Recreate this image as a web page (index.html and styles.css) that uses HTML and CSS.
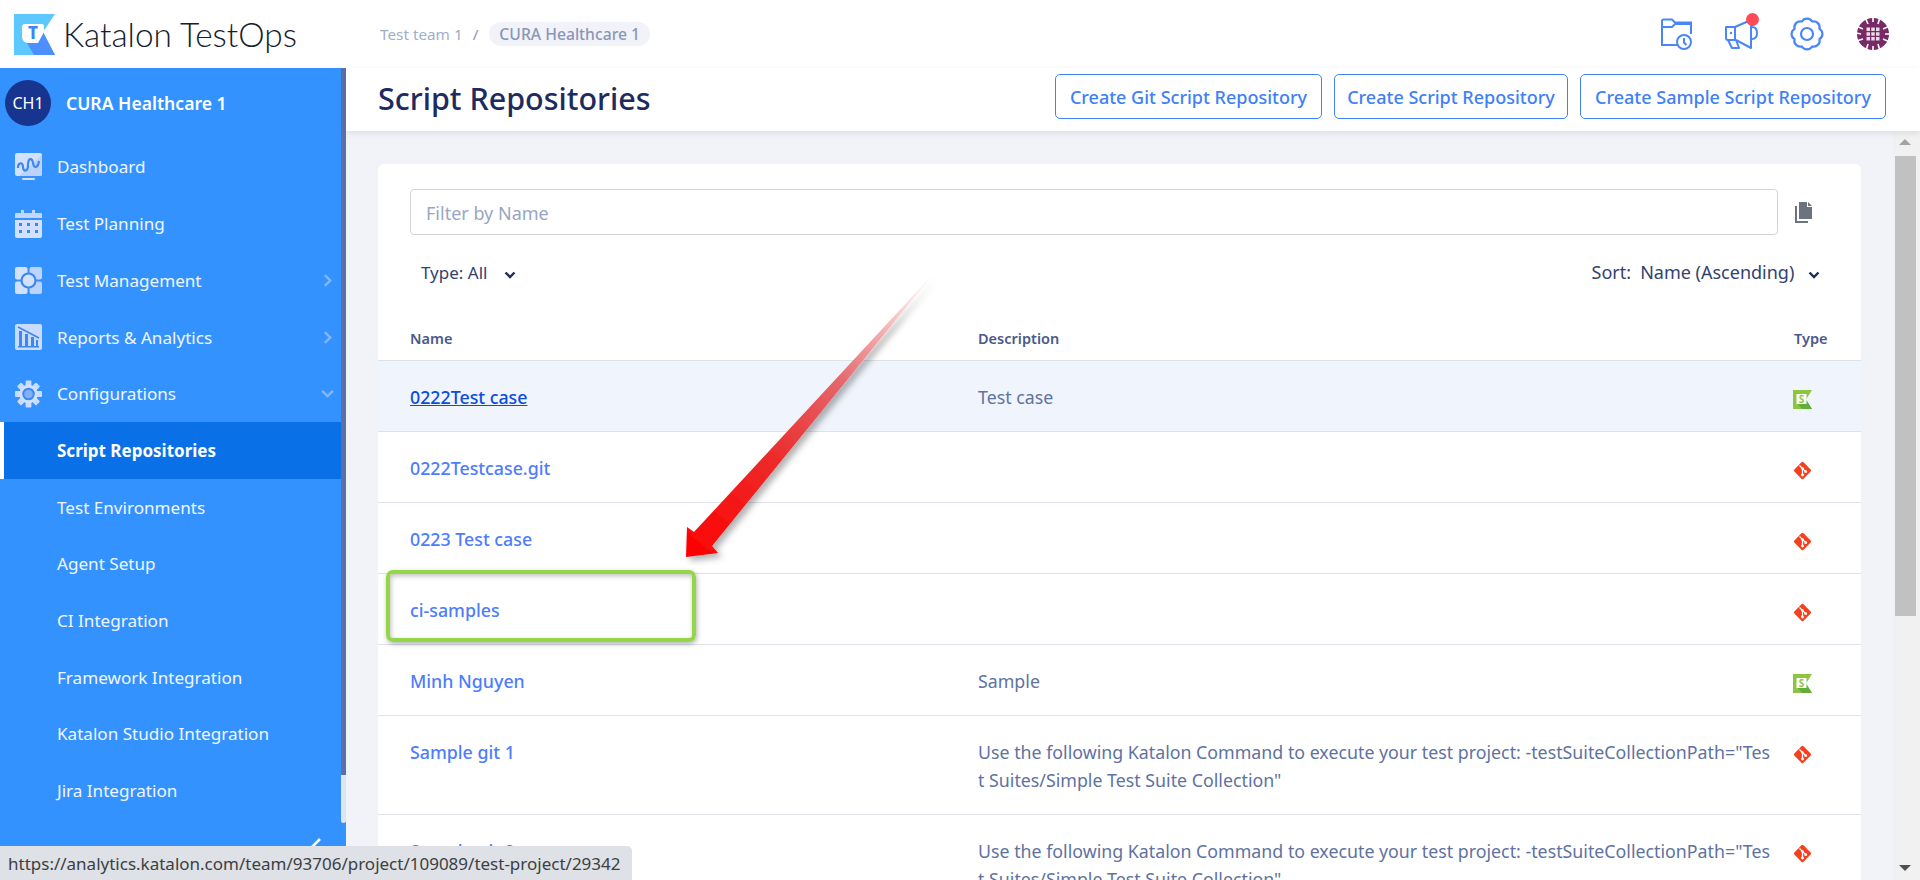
FILE: index.html
```html
<!DOCTYPE html>
<html lang="en">
<head>
    <meta charset="UTF-8">
    <title>Script Repositories</title>
    <link rel="stylesheet" href="styles.css">
</head>
<body>
    <svg class="defs" width="0" height="0">
        <symbol id="git" viewBox="0 0 19 19">
            <rect x="3" y="3" width="13" height="13" rx="1.500" transform="rotate(45 9.500 9.500)" fill="#f4401e"/>
            <path d="M6.500 4.500l3 3v6.500M9.500 7.500l3.200 3.200" fill="none" stroke="#fff" stroke-width="1.200"/>
            <circle cx="9.500" cy="7.500" r="1.300" fill="#fff"/>
            <circle cx="9.500" cy="14" r="1.400" fill="#fff"/>
            <circle cx="12.700" cy="10.700" r="1.400" fill="#fff"/>
        </symbol>
    </svg>

    <header class="topbar">
        <div class="brand">
            <svg class="brand-logo" viewBox="0 0 41 41" width="41" height="41">
                <path d="M0 0h41L29 18l12 23H0z" fill="#5cc8ff"/>
                <path d="M10 24l19-6 12 23H20z" fill="#4d8fff"/>
                <path d="M11 10h17a2 2 0 0 1 2 2v6l-6 11H14a6 6 0 0 1-6-6V13a3 3 0 0 1 3-3z" fill="#fff"/>
                <text x="19" y="25" class="mark-t">T</text>
            </svg>
            <span class="brand-name">Katalon TestOps</span>
        </div>
        <nav class="crumbs">
            <span class="crumb">Test team 1</span>
            <span class="crumb-sep">/</span>
            <span class="crumb-pill">CURA Healthcare 1</span>
        </nav>
        <div class="top-icons">
            <svg class="top-icon" viewBox="0 0 33 32" width="33" height="32">
                <g fill="none" stroke="#4a86f7" stroke-width="2">
                    <path d="M18 27H2V9h10l3-3h16v10"/>
                    <path d="M2 9V3a1.500 1.500 0 0 1 1.500-1.500H12l3 3h16V6"/>
                    <circle cx="24" cy="24" r="7"/>
                    <path d="M24 20v4.500l2.500 2.500"/>
                </g>
            </svg>
            <span class="bell">
                <svg viewBox="0 0 33 32" width="33" height="32">
                    <g fill="none" stroke="#4a86f7" stroke-width="2" stroke-linejoin="round">
                        <path d="M1 9h9v13H3a2 2 0 0 1-2-2z"/>
                        <path d="M10 9L26 2v28L11 22"/>
                        <path d="M27 9c3 0 5 2 5 6s-2 6-5 6"/>
                        <path d="M3 22l4 8h7l-3-8"/>
                    </g>
                    <circle cx="6" cy="15" r="1.200" fill="#4a86f7"/>
                </svg>
                <span class="bell-dot"></span>
            </span>
            <svg class="top-icon" viewBox="0 0 34 34" width="34" height="34">
                <path d="M22.170 4.530A6 6 0 0 1 29.470 11.830A6 6 0 0 1 29.470 22.170A6 6 0 0 1 22.170 29.470A6 6 0 0 1 11.830 29.470A6 6 0 0 1 4.530 22.170A6 6 0 0 1 4.530 11.830A6 6 0 0 1 11.830 4.530A6 6 0 0 1 22.170 4.530z" fill="none" stroke="#4a86f7" stroke-width="2.200"/>
                <circle cx="17" cy="17" r="6" fill="none" stroke="#4a86f7" stroke-width="2.200"/>
            </svg>
            <svg class="top-icon" viewBox="0 0 34 34" width="34" height="34">
                <circle cx="17" cy="17" r="16" fill="#772a66"/>
                <g fill="#e9dce6">
                    <rect x="10.500" y="10.500" width="3.500" height="3.500"/><rect x="15.250" y="10.500" width="3.500" height="3.500"/><rect x="20" y="10.500" width="3.500" height="3.500"/>
                    <rect x="10.500" y="15.250" width="3.500" height="3.500"/><rect x="15.250" y="15.250" width="3.500" height="3.500"/><rect x="20" y="15.250" width="3.500" height="3.500"/>
                    <rect x="10.500" y="20" width="3.500" height="3.500"/><rect x="15.250" y="20" width="3.500" height="3.500"/><rect x="20" y="20" width="3.500" height="3.500"/>
                </g>
                <g stroke="#fff" stroke-width="1.600">
                    <path d="M0 9l7 3M0 24l7-2M27 12l7-3M27 22l7 3M9 0l3 7M24 0l-2 7M12 27l-2 7M22 27l2 7M0 16l5 1M29 17l5 0M17 0l0 5M17 29l0 5"/>
                </g>
            </svg>
        </div>
    </header>

    <div class="layout">
        <aside class="sidebar">
            <div class="side-main">
                <div class="project">
                    <span class="project-badge">CH1</span>
                    <span class="project-name">CURA Healthcare 1</span>
                </div>
                <a class="side-item">
                    <svg class="side-icon" viewBox="0 0 27 27" width="27" height="27">
                        <rect x="0" y="0" width="27" height="23" rx="2" fill="#d3e1ff"/>
                        <path d="M27 2L4 23h21a2 2 0 0 0 2-2z" fill="#bcd2ff"/>
                        <path d="M3 15c0-6 5-6 5-1s5 5 5-2 4-8 5-2 5 5 6-2" fill="none" stroke="#3a88f0" stroke-width="2.200"/>
                        <rect x="7" y="25" width="13" height="2" rx="1" fill="#d3e1ff"/>
                    </svg>
                    <span>Dashboard</span>
                </a>
                <a class="side-item">
                    <svg class="side-icon" viewBox="0 0 27 28" width="27" height="28">
                        <path d="M1 3h5V0h3v3h8V0h3v3h6a1 1 0 0 1 1 1v4H0V4a1 1 0 0 1 1-1z" fill="#c3d7ff"/>
                        <path d="M0 10h27v16a2 2 0 0 1-2 2H2a2 2 0 0 1-2-2z" fill="#d3e1ff"/>
                        <g fill="#3a88f0">
                            <rect x="4" y="13" width="3" height="3"/><rect x="12" y="13" width="3" height="3"/><rect x="20" y="13" width="3" height="3"/>
                            <rect x="4" y="20" width="3" height="3"/><rect x="12" y="20" width="3" height="3"/><rect x="20" y="20" width="3" height="3"/>
                        </g>
                    </svg>
                    <span>Test Planning</span>
                </a>
                <a class="side-item">
                    <svg class="side-icon" viewBox="0 0 27 27" width="27" height="27">
                        <rect x="0" y="0" width="12.500" height="12.500" rx="2" fill="#d3e1ff"/>
                        <rect x="14.500" y="0" width="12.500" height="12.500" rx="2" fill="#bcd2ff"/>
                        <rect x="0" y="14.500" width="12.500" height="12.500" rx="2" fill="#d3e1ff"/>
                        <rect x="14.500" y="14.500" width="12.500" height="12.500" rx="2" fill="#bcd2ff"/>
                        <circle cx="13.500" cy="13.500" r="7" fill="#d3e1ff" stroke="#3a88f0" stroke-width="2.200"/>
                    </svg>
                    <span>Test Management</span>
                    <svg class="side-arrow" viewBox="0 0 10 14" width="9" height="13"><path d="M2 1l6 6-6 6" fill="none" stroke="#82b6ff" stroke-width="2.600"/></svg>
                </a>
                <a class="side-item">
                    <svg class="side-icon" viewBox="0 0 27 27" width="27" height="27">
                        <rect x="0" y="0" width="27" height="26" rx="2" fill="#c9dbff"/>
                        <path d="M3 3l21 11" fill="none" stroke="#3a88f0" stroke-width="1.500"/>
                        <g fill="#3a88f0">
                            <rect x="4" y="7" width="3" height="15"/><rect x="10" y="10" width="3" height="12"/><rect x="16" y="13" width="3" height="9"/><rect x="21" y="16" width="2" height="6"/>
                            <rect x="3" y="22" width="21" height="1.500"/>
                        </g>
                    </svg>
                    <span>Reports &amp; Analytics</span>
                    <svg class="side-arrow" viewBox="0 0 10 14" width="9" height="13"><path d="M2 1l6 6-6 6" fill="none" stroke="#82b6ff" stroke-width="2.600"/></svg>
                </a>
                <a class="side-item">
                    <svg class="side-icon" viewBox="0 0 28 28" width="28" height="28">
                        <g fill="#c9dbff">
                            <rect x="11" y="0" width="6" height="28" rx="1"/>
                            <rect x="11" y="0" width="6" height="28" rx="1" transform="rotate(45 14 14)"/>
                            <rect x="11" y="0" width="6" height="28" rx="1" transform="rotate(90 14 14)"/>
                            <rect x="11" y="0" width="6" height="28" rx="1" transform="rotate(135 14 14)"/>
                        </g>
                        <circle cx="14" cy="14" r="9.500" fill="#d3e1ff"/>
                        <circle cx="14" cy="14" r="5.500" fill="#7fb0f8" stroke="#3a88f0" stroke-width="2"/>
                    </svg>
                    <span>Configurations</span>
                    <svg class="side-arrow side-arrow-down" viewBox="0 0 14 10" width="13" height="9"><path d="M1 2l6 6 6-6" fill="none" stroke="#82b6ff" stroke-width="2.600"/></svg>
                </a>
                <a class="side-item side-sub is-active">Script Repositories</a>
                <a class="side-item side-sub">Test Environments</a>
                <a class="side-item side-sub">Agent Setup</a>
                <a class="side-item side-sub">CI Integration</a>
                <a class="side-item side-sub">Framework Integration</a>
                <a class="side-item side-sub">Katalon Studio Integration</a>
                <a class="side-item side-sub">Jira Integration</a>
                <svg class="side-collapse" viewBox="0 0 14 14" width="14" height="14"><path d="M11 1L2 10l9 9" fill="none" stroke="#fff" stroke-width="2.600"/></svg>
            </div>
            <div class="side-scroll">
                <div class="side-thumb"></div>
                <div class="side-track"></div>
            </div>
        </aside>

        <main class="page">
            <div class="page-head">
                <h1>Script Repositories</h1>
                <div class="page-actions">
                    <button class="btn btn-git">Create Git Script Repository</button>
                    <button class="btn btn-script">Create Script Repository</button>
                    <button class="btn btn-sample">Create Sample Script Repository</button>
                </div>
            </div>
            <div class="page-body">
                <div class="page-scroll">
                    <section class="card">
                        <div class="filter-row">
                            <input class="filter-input" type="text" placeholder="Filter by Name">
                            <svg class="copy-icon" viewBox="0 0 18 21" width="18" height="21">
                                <path d="M5 0h8v5h5v12H5z" fill="#6b7280"/>
                                <path d="M14 0l4 4h-4z" fill="#6b7280"/>
                                <path d="M3 4v15h11v2H1V4z" fill="#6b7280"/>
                            </svg>
                        </div>
                        <div class="option-row">
                            <span class="option option-type">Type: All
                                <svg viewBox="0 0 12 8" width="12" height="8"><path d="M1.500 1.500L6 6l4.500-4.500" fill="none" stroke="#1d2b5e" stroke-width="2.400"/></svg>
                            </span>
                            <span class="option option-sort"><span class="option-label">Sort:</span>Name (Ascending)
                                <svg viewBox="0 0 12 8" width="12" height="8"><path d="M1.500 1.500L6 6l4.500-4.500" fill="none" stroke="#1d2b5e" stroke-width="2.400"/></svg>
                            </span>
                        </div>
                        <table class="repo-table">
                            <colgroup>
                                <col class="col-name">
                                <col class="col-desc">
                                <col class="col-type">
                            </colgroup>
                            <thead>
                                <tr><th>Name</th><th>Description</th><th>Type</th></tr>
                            </thead>
                            <tbody>
                                <tr class="is-hover">
                                    <td><a class="repo-link">0222Test case</a></td>
                                    <td class="repo-desc">Test case</td>
                                    <td>
                                        <svg class="type-icon" viewBox="0 0 19 19" width="19" height="19">
                                            <path d="M0 0h19l-6 9.500 6 9.500H0z" fill="#8cc63f"/>
                                            <path d="M4 13l9-3.500 6 9.500H9z" fill="#62ad3c"/>
                                            <rect x="3.500" y="4" width="10" height="10" fill="#fff"/>
                                            <text x="8.500" y="12.500" class="mark-s">S</text>
                                        </svg>
                                    </td>
                                </tr>
                                <tr>
                                    <td><a class="repo-link">0222Testcase.git</a></td>
                                    <td class="repo-desc"></td>
                                    <td><svg class="type-icon" width="19" height="19"><use href="#git"/></svg></td>
                                </tr>
                                <tr>
                                    <td><a class="repo-link">0223 Test case</a></td>
                                    <td class="repo-desc"></td>
                                    <td><svg class="type-icon" width="19" height="19"><use href="#git"/></svg></td>
                                </tr>
                                <tr>
                                    <td><a class="repo-link">ci-samples</a></td>
                                    <td class="repo-desc"></td>
                                    <td><svg class="type-icon" width="19" height="19"><use href="#git"/></svg></td>
                                </tr>
                                <tr>
                                    <td><a class="repo-link">Minh Nguyen</a></td>
                                    <td class="repo-desc">Sample</td>
                                    <td>
                                        <svg class="type-icon" viewBox="0 0 19 19" width="19" height="19">
                                            <path d="M0 0h19l-6 9.500 6 9.500H0z" fill="#8cc63f"/>
                                            <path d="M4 13l9-3.500 6 9.500H9z" fill="#62ad3c"/>
                                            <rect x="3.500" y="4" width="10" height="10" fill="#fff"/>
                                            <text x="8.500" y="12.500" class="mark-s">S</text>
                                        </svg>
                                    </td>
                                </tr>
                                <tr>
                                    <td><a class="repo-link">Sample git 1</a></td>
                                    <td class="repo-desc">Use the following Katalon Command to execute your test project: -testSuiteCollectionPath="Test Suites/Simple Test Suite Collection"</td>
                                    <td><svg class="type-icon" width="19" height="19"><use href="#git"/></svg></td>
                                </tr>
                                <tr>
                                    <td><a class="repo-link">Sample git 2</a></td>
                                    <td class="repo-desc">Use the following Katalon Command to execute your test project: -testSuiteCollectionPath="Test Suites/Simple Test Suite Collection"</td>
                                    <td><svg class="type-icon" width="19" height="19"><use href="#git"/></svg></td>
                                </tr>
                            </tbody>
                        </table>
                    </section>
                </div>
                <div class="scrollbar">
                    <span class="scroll-up"></span>
                    <div class="scroll-thumb"></div>
                    <span class="scroll-down"></span>
                </div>
            </div>
        </main>
    </div>

    <!-- annotation drawn over the screenshot -->
    <div class="callout"></div>
    <svg class="callout-arrow" viewBox="0 0 1920 880" width="1920" height="880">
        <defs>
            <linearGradient id="arrow-fade" gradientUnits="userSpaceOnUse" x1="686" y1="557" x2="935" y2="272">
                <stop offset="0" stop-color="#ff0000"/>
                <stop offset="0.35" stop-color="#ec2b2b"/>
                <stop offset="0.62" stop-color="#e4686c"/>
                <stop offset="0.82" stop-color="#f6bcbc"/>
                <stop offset="1" stop-color="#fde9e9" stop-opacity="0.2"/>
            </linearGradient>
            <filter id="arrow-shadow" x="-20%" y="-20%" width="140%" height="140%">
                <feDropShadow dx="4" dy="4" stdDeviation="3" flood-color="#000" flood-opacity="0.3"/>
            </filter>
        </defs>
        <polygon points="686,557 687,527 694,532 935,272 712,546 718,553" fill="url(#arrow-fade)" filter="url(#arrow-shadow)"/>
    </svg>

    <div class="status-tip">https://analytics.katalon.com/team/93706/project/109089/test-project/29342</div>
</body>
</html>
```

FILE: styles.css
```css
html, body {
    height: 100%;
    margin: 0;
    overflow: hidden;
}

body {
    font-family: "Noto Sans", Arial, sans-serif;
    color: #1d2b5e;
    background: #fff;
    position: relative;
}

.defs {
    position: absolute;
}

.mark-s {
    font: 700 10px "Noto Sans", sans-serif;
    fill: #8cc63f;
    text-anchor: middle;
}

.mark-t {
    font: 800 17px "Noto Sans", sans-serif;
    fill: #3d86f5;
    text-anchor: middle;
}

/* top bar */
.topbar {
    height: 68px;
    display: flex;
    align-items: center;
}

.brand {
    width: 380px;
    flex-shrink: 0;
    display: flex;
    align-items: center;
    padding-left: 14px;
    box-sizing: border-box;
}

.brand-name {
    margin-left: 8px;
    font-family: Lato, sans-serif;
    font-size: 33.400px;
    font-weight: 300;
    color: #14202c;
}

.crumbs {
    display: flex;
    align-items: center;
    font-size: 15.300px;
    flex: 1;
}

.crumb {
    color: #a2adc6;
}

.crumb-sep {
    margin: 0 11px 0 10px;
    color: #8a96b8;
}

.crumb-pill {
    background: #f1f3f8;
    color: #8a96b8;
    font-size: 15.700px;
    font-weight: 500;
    padding: 0 10px;
    height: 24px;
    line-height: 25px;
    border-radius: 12px;
}

.top-icons {
    display: flex;
    align-items: center;
    gap: 32px;
    padding-right: 30px;
}

.top-icon {
    display: block;
}

.bell {
    position: relative;
    display: block;
    height: 32px;
}

.bell svg {
    display: block;
}

.bell-dot {
    position: absolute;
    top: -5px;
    right: -1px;
    width: 13px;
    height: 13px;
    border-radius: 50%;
    background: #ff4b55;
}

/* layout */
.layout {
    display: flex;
    height: 812px;
}

.sidebar {
    width: 346px;
    flex-shrink: 0;
    display: flex;
    background: #3492ff;
}

.side-main {
    flex: 1;
    display: flex;
    flex-direction: column;
}

.project {
    height: 70.650px;
    display: flex;
    align-items: center;
    padding-left: 5px;
    box-sizing: border-box;
}

.project-badge {
    width: 46px;
    height: 46px;
    border-radius: 50%;
    background: #17348f;
    color: #fff;
    font-size: 16px;
    display: flex;
    align-items: center;
    justify-content: center;
}

.project-name {
    margin-left: 15px;
    color: #fff;
    font-size: 17.600px;
    font-weight: 600;
}

.side-item {
    height: 56.700px;
    flex-shrink: 0;
    display: flex;
    align-items: center;
    padding-left: 15px;
    color: #f0f6ff;
    font-size: 17.100px;
    position: relative;
}

.side-icon {
    width: 27px;
    margin-right: 15px;
    flex-shrink: 0;
}

.side-sub {
    padding-left: 57px;
}

.side-item.is-active {
    background: #0970e8;
    border-left: 4px solid #fff;
    padding-left: 53px;
    color: #fff;
    font-size: 17px;
    font-weight: 700;
}

.side-arrow {
    margin-left: auto;
    margin-right: 9px;
}

.side-arrow-down {
    margin-right: 7px;
}

.side-collapse {
    align-self: flex-end;
    margin: 19px 18px 0 0;
    overflow: visible;
}

.side-scroll {
    width: 5px;
    flex-shrink: 0;
}

.side-thumb {
    height: 707px;
    background: #5b6fa8;
}

.side-track {
    height: 48px;
    background: #dfe4f0;
    border-radius: 0 0 3px 3px;
}

/* page */
.page {
    flex: 1;
    min-width: 0;
    display: flex;
    flex-direction: column;
    background: #f1f3f8;
}

.page-head {
    height: 63px;
    flex-shrink: 0;
    display: flex;
    justify-content: space-between;
    padding: 0 34px 0 32px;
    background: #fff;
    box-shadow: 0 2px 6px rgba(60, 70, 100, 0.12);
    position: relative;
}

.page-head h1 {
    margin: 9px 0 0;
    font-size: 30.500px;
    line-height: 42px;
    font-weight: 500;
    color: #1d2b5e;
}

.page-actions {
    display: flex;
    gap: 12px;
    margin-top: 6px;
    align-items: flex-start;
}

.btn {
    height: 45px;
    padding: 0;
    background: #fff;
    border: 1px solid #3e84f6;
    border-radius: 5px;
    color: #3e80f7;
    font-family: inherit;
    font-size: 18px;
    font-weight: 500;
}

.btn-git {
    width: 267px;
}

.btn-script {
    width: 234px;
}

.btn-sample {
    width: 306px;
}

.page-body {
    flex: 1;
    min-height: 0;
    display: flex;
}

.page-scroll {
    flex: 1;
    min-width: 0;
    overflow: hidden;
    padding: 33px 32px 0 32px;
}

.card {
    background: #fff;
    border-radius: 6px;
    padding-top: 25px;
}

.filter-row {
    display: flex;
    align-items: center;
    padding-left: 32px;
}

.filter-input {
    width: 1368px;
    height: 46px;
    box-sizing: border-box;
    border: 1px solid #d0d3dc;
    border-radius: 4px;
    padding: 1px 15px 0;
    font-family: inherit;
    font-size: 18px;
    outline: none;
}

.filter-input::placeholder {
    color: #9aa5c3;
}

.copy-icon {
    margin-left: 16px;
}

.option-row {
    height: 48px;
    margin-top: 13px;
    display: flex;
    align-items: center;
    justify-content: space-between;
    font-size: 17px;
    color: #33426f;
}

.option svg {
    margin-left: 12px;
}

.option-type {
    margin-left: 43px;
}

.option-sort {
    margin-right: 41px;
    font-size: 18px;
}

.option-sort svg {
    margin-left: 9px;
}

.option-label {
    margin-right: 9px;
}

.repo-table {
    width: 100%;
    table-layout: fixed;
    border-collapse: separate;
    border-spacing: 0;
}

.col-name {
    width: 600px;
}

.col-type {
    width: 67px;
}

.repo-table th {
    height: 65px;
    padding: 32px 0 0;
    text-align: left;
    vertical-align: top;
    font-size: 14.500px;
    font-weight: 600;
    line-height: 20px;
    color: #4a5a8a;
    border-bottom: 1px solid #dfe2ea;
    box-sizing: border-box;
}

.repo-table th:first-child,
.repo-table td:first-child {
    padding-left: 32px;
}

.repo-table td {
    padding: 22px 0 20px;
    vertical-align: top;
    line-height: 28px;
    font-size: 17.800px;
    border-bottom: 1px solid #dfe2ea;
}

.repo-table .repo-desc {
    padding-right: 19px;
    word-break: break-all;
    color: #60729f;
}

.is-hover td {
    background: #f0f4fc;
}

.repo-link {
    color: #4d7cfe;
    font-weight: 500;
}

.is-hover .repo-link {
    color: #0b4de0;
    text-decoration: underline;
}

.type-icon {
    display: block;
    margin: 7px 0 0 -1px;
}

/* browser scrollbar */
.scrollbar {
    width: 24px;
    flex-shrink: 0;
    display: flex;
    flex-direction: column;
    align-items: center;
    background: #f1f1f1;
    padding-right: 3px;
    box-sizing: content-box;
}

.scroll-up,
.scroll-down {
    width: 0;
    height: 0;
    border-left: 6px solid transparent;
    border-right: 6px solid transparent;
}

.scroll-up {
    margin-top: 8px;
    border-bottom: 6px solid #a3a3a3;
}

.scroll-down {
    margin-top: auto;
    margin-bottom: 9px;
    border-top: 6px solid #505050;
}

.scroll-thumb {
    width: 21px;
    height: 460px;
    margin-top: 11px;
    background: #c1c1c1;
}

/* annotation */
.callout {
    position: absolute;
    left: 386px;
    top: 570px;
    width: 310px;
    height: 72px;
    box-sizing: border-box;
    border: 4px solid #94d64a;
    border-radius: 7px;
    box-shadow: 1px 2px 5px rgba(0, 0, 0, 0.3), inset 1px 2px 5px rgba(0, 0, 0, 0.25);
}

.callout-arrow {
    position: absolute;
    left: 0;
    top: 0;
    pointer-events: none;
}

.status-tip {
    position: absolute;
    left: 0;
    bottom: 0;
    width: 632px;
    height: 34px;
    box-sizing: border-box;
    padding-left: 8px;
    line-height: 36px;
    font-size: 17px;
    color: #3c4043;
    white-space: nowrap;
    background: #dee1e6;
    border-radius: 0 5px 0 0;
}
```
